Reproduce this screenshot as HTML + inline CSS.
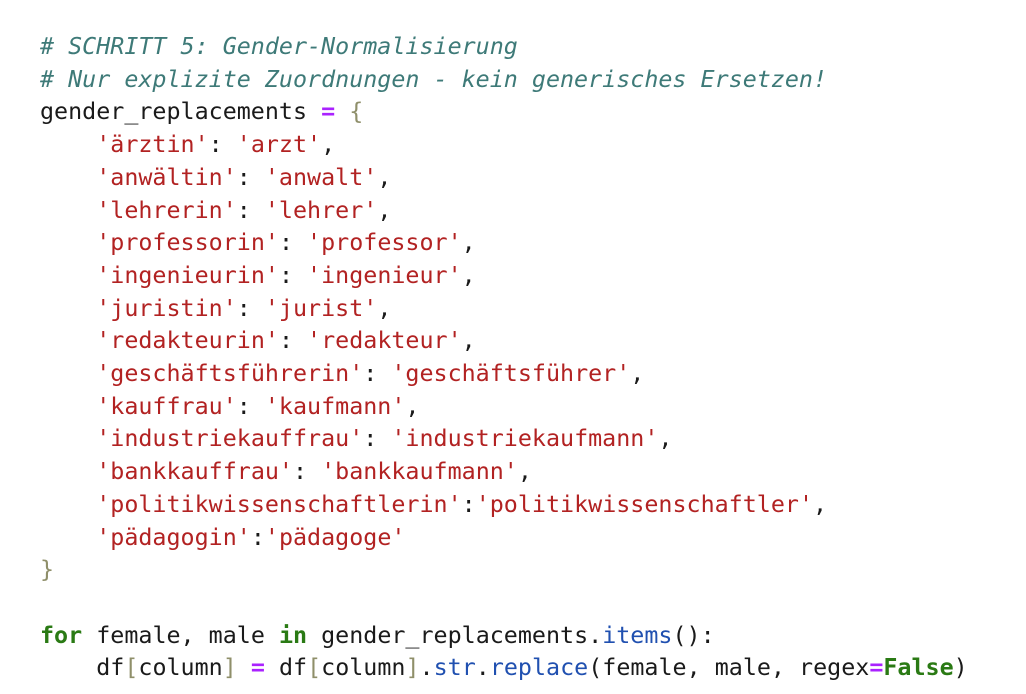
<!DOCTYPE html>
<html><head><meta charset="utf-8"><style>
html,body{margin:0;padding:0;background:#fff;width:1026px;height:694px;overflow:hidden}
pre{margin:0;position:absolute;left:40px;top:30px;font-family:"DejaVu Sans Mono","Liberation Mono",monospace;font-size:23.35px;line-height:32.7px;color:#1a1a1a}
.c{color:#3e7a78;font-style:italic}
.s{color:#b22222}
.o{color:#aa22ff;font-weight:bold}
.b{color:#8f8f6a}
.k{color:#2a7a14;font-weight:bold}
.f{color:#2050b0}
</style></head><body><pre><span class="c"># SCHRITT 5: Gender-Normalisierung</span>
<span class="c"># Nur explizite Zuordnungen - kein generisches Ersetzen!</span>
gender_replacements <span class="o">=</span> <span class="b">{</span>
    <span class="s">'ärztin'</span>: <span class="s">'arzt'</span>,
    <span class="s">'anwältin'</span>: <span class="s">'anwalt'</span>,
    <span class="s">'lehrerin'</span>: <span class="s">'lehrer'</span>,
    <span class="s">'professorin'</span>: <span class="s">'professor'</span>,
    <span class="s">'ingenieurin'</span>: <span class="s">'ingenieur'</span>,
    <span class="s">'juristin'</span>: <span class="s">'jurist'</span>,
    <span class="s">'redakteurin'</span>: <span class="s">'redakteur'</span>,
    <span class="s">'geschäftsführerin'</span>: <span class="s">'geschäftsführer'</span>,
    <span class="s">'kauffrau'</span>: <span class="s">'kaufmann'</span>,
    <span class="s">'industriekauffrau'</span>: <span class="s">'industriekaufmann'</span>,
    <span class="s">'bankkauffrau'</span>: <span class="s">'bankkaufmann'</span>,
    <span class="s">'politikwissenschaftlerin'</span>:<span class="s">'politikwissenschaftler'</span>,
    <span class="s">'pädagogin'</span>:<span class="s">'pädagoge'</span>
<span class="b">}</span>

<span class="k">for</span> female, male <span class="k">in</span> gender_replacements.<span class="f">items</span>():
    df<span class="b">[</span>column<span class="b">]</span> <span class="o">=</span> df<span class="b">[</span>column<span class="b">]</span>.<span class="f">str</span>.<span class="f">replace</span>(female, male, regex<span class="o">=</span><span class="k">False</span>)
</pre></body></html>
